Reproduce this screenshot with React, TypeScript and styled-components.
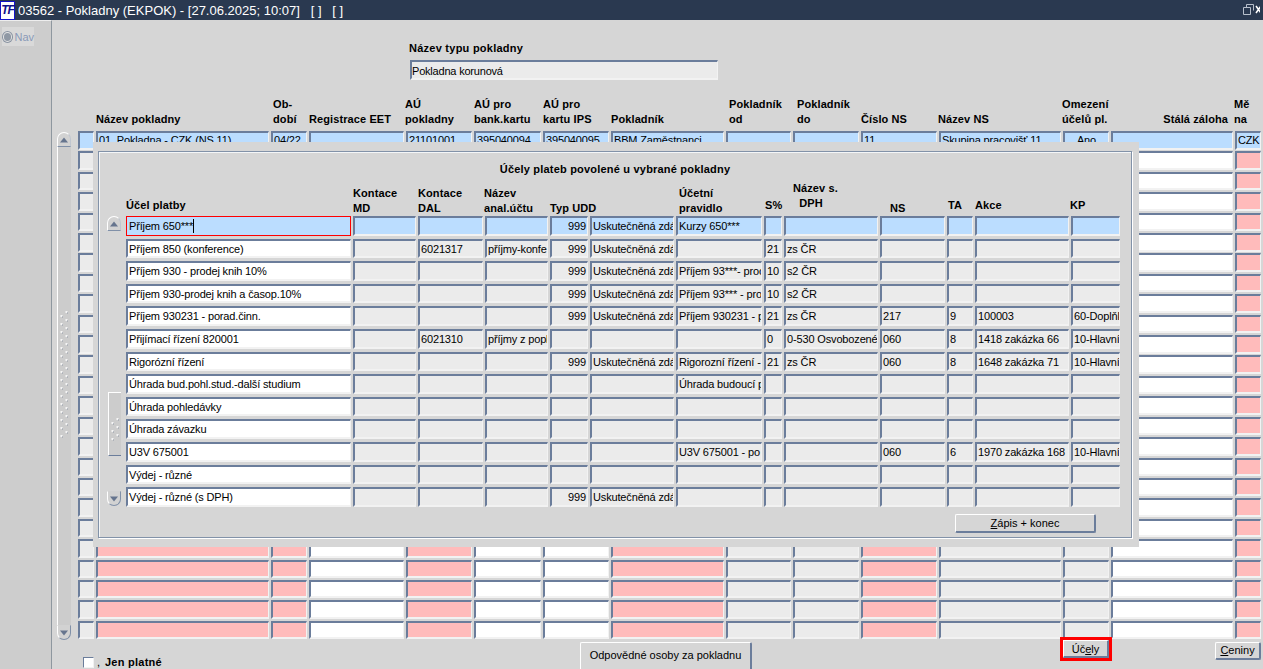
import React from "react";
import styled, { createGlobalStyle } from "styled-components";

const Global = createGlobalStyle`
  html, body { margin: 0; padding: 0; background: #d6d6d6; }
  * { box-sizing: border-box; }
  body { font-family: "Liberation Sans", Arial, sans-serif; font-size: 11px; color: #000; }
`;

const BG = "#d6d6d6";
const BLUE = "#bbddff";
const PINK = "#ffbbbb";
const GRAY = "#ebebeb";
const WHITE = "#ffffff";

type Tone = "blue" | "pink" | "gray" | "white";
const toneColor: Record<Tone, string> = { blue: BLUE, pink: PINK, gray: GRAY, white: WHITE };

const Screen = styled.div`
  width: 1263px;
  height: 669px;
  overflow: hidden;
  display: flex;
  flex-direction: column;
  background: ${BG};
`;
const TitleBar = styled.header`
  height: 20px;
  flex: none;
  background: #2a3950;
  color: #fff;
  display: flex;
  align-items: center;
  font-size: 13px;
  white-space: pre;
`;
const Logo = styled.div`
  width: 15px;
  height: 19px;
  margin-right: 3px;
  background: #fff;
  border: 1px solid #1414c8;
  color: #10108a;
  font: italic 700 12px/17px "Liberation Sans", sans-serif;
  text-align: center;
  letter-spacing: -1px;
`;
const WindowIcon = styled.svg`
  margin-left: auto;
  margin-right: 3px;
  flex: none;
`;
const Body = styled.div`
  flex: 1;
  display: flex;
  min-height: 0;
`;
const Rail = styled.nav`
  width: 52px;
  flex: none;
  background: #cdcdcd;
  border-top: 1px solid #eeeeee;
  border-right: 1px solid #8e979f;
  padding: 6px 0 0 2px;
`;
const NavItem = styled.div`
  width: 32px;
  height: 19px;
  background: #d9d9d9;
  color: #8a9ab8;
  display: flex;
  align-items: center;
  gap: 2px;
  font-size: 11px;
`;
const Radio = styled.span`
  width: 10px;
  height: 10px;
  border-radius: 50%;
  background: #8f98a4;
  border: 1px solid #e4e4e4;
  box-shadow: 0 0 0 1px #8a94a2;
  margin-left: 1px;
`;
const Main = styled.main`
  position: relative;
  flex: 1;
  min-width: 0;
  display: flex;
  flex-direction: column;
`;
const TypeBlock = styled.section`
  margin: 21px 0 0 357px;
  width: 309px;
  height: 39px;
`;
const BoldLabel = styled.div`
  font-weight: 700;
  font-size: 11px;
  line-height: 15px;
  letter-spacing: 0.25px;
  white-space: pre;
`;
const TypeField = styled.div`
  margin: 4px 0 0 1px;
  height: 20px;
  padding: 1px 0;
  line-height: 16px;
  letter-spacing: -0.2px;
  background: ${GRAY};
  border-style: solid;
  border-width: 2px 1px 2px 2px;
  border-color: #6b7d9b #f2f2f2 #f2f2f2 #6b7d9b;
`;
const GridArea = styled.section`
  margin-top: 17px;
  display: flex;
  align-items: flex-start;
  padding-left: 5px;
`;
const Scroll = styled.div<{ $height: number; $top: number }>`
  width: 14px;
  height: ${(p) => p.$height}px;
  margin-top: ${(p) => p.$top}px;
  flex: none;
  display: flex;
  flex-direction: column;
`;
const ScrollButton = styled.div<{ $down?: boolean }>`
  width: 14px;
  height: 15px;
  flex: none;
  display: flex;
  align-items: center;
  justify-content: center;
  background: #d2d2d2;
  border: 1px solid #fff;
  border-color: ${(p) => (p.$down ? "#d2d2d2 #8090a8 #8090a8 #fff" : "#fff #c0c6d0 #8090a8 #fff")};
  border-radius: ${(p) => (p.$down ? "0 0 7px 7px" : "7px 7px 0 0")};
`;
const Track = styled.div`
  flex: 1;
  position: relative;
  background: #cccccc;
  border-left: 1px solid #fff;
`;
const Grid = styled.div`
  margin-left: 7px;
  display: flex;
  flex-direction: column;
`;
const HeaderRow = styled.div<{ $cols: string; $height: number }>`
  display: grid;
  grid-template-columns: ${(p) => p.$cols};
  height: ${(p) => p.$height}px;
  align-items: end;
`;
const HeadCell = styled(BoldLabel)<{ $dx?: number; $lift?: number; $right?: boolean }>`
  letter-spacing: 0.1px;
  margin-left: ${(p) => p.$dx ?? 0}px;
  padding-bottom: ${(p) => p.$lift ?? 0}px;
  text-align: ${(p) => (p.$right ? "right" : "left")};
  padding-right: ${(p) => (p.$right ? 7 : 0)}px;
`;
const DataRows = styled.div<{ $gap: number }>`
  display: flex;
  flex-direction: column;
  gap: ${(p) => p.$gap}px;
`;
const DataRow = styled.div<{ $cols: string; $height: number }>`
  display: grid;
  grid-template-columns: ${(p) => p.$cols};
  height: ${(p) => p.$height}px;
`;
const Field = styled.div<{ $tone: Tone; $align?: string; $focus?: boolean; $line?: number }>`
  min-width: 0;
  margin-right: 2px;
  padding: 0 1px 0 1px;
  overflow: hidden;
  white-space: pre;
  letter-spacing: -0.15px;
  line-height: ${(p) => p.$line ?? 15}px;
  background: ${(p) => toneColor[p.$tone]};
  text-align: ${(p) => p.$align ?? "left"};
  border-style: solid;
  border-width: 2px 1px 2px 2px;
  border-color: #6b7d9b #f2f2f2 #f2f2f2 #6b7d9b;
  ${(p) => (p.$focus ? "border: 1px solid #f00; padding-left: 2px; line-height: 19px;" : "")}
`;
const Caret = styled.span`
  display: inline-block;
  width: 1px;
  height: 14px;
  background: #000;
  vertical-align: -3px;
`;
const Footer = styled.footer`
  display: grid;
  grid-template-columns: 528px 483px 152px 46px;
  align-items: start;
  height: 29px;
`;
const JenPlatne = styled.label`
  display: flex;
  align-items: center;
  margin: 16px 0 0 31px;
  font-weight: 700;
  font-size: 11px;
  letter-spacing: 0.25px;
  white-space: nowrap;
`;
const CheckBox = styled.span`
  width: 11px;
  height: 11px;
  background: #fff;
  border: 1px solid;
  border-color: #6b7d9b #f2f2f2 #f2f2f2 #6b7d9b;
`;
const Comma = styled.span`
  width: 11px;
  padding-left: 3px;
  font-weight: 400;
`;
const PushButton = styled.button`
  font: 11px "Liberation Sans", sans-serif;
  color: #000;
  height: 18px;
  padding: 0;
  background: ${BG};
  border-style: solid;
  border-width: 1px 2px 2px 1px;
  border-color: #fff #6b7d9b #6b7d9b #fff;
  border-radius: 2px;
  white-space: nowrap;
`;
const TabButton = styled(PushButton)`
  height: 32px;
  width: 172px;
  margin-top: 1.5px;
  padding-bottom: 4px;
`;
const MarkedButton = styled(PushButton)`
  width: 46px;
  border-radius: 0;
  outline: 3px solid #f00;
`;
const SideButton = styled(PushButton)`
  width: 46px;
  margin-top: 1.5px;
`;
const Underlined = styled.span`
  text-decoration: underline;
`;
const Modal = styled.aside`
  position: absolute;
  left: 41px;
  top: 122px;
  width: 1046px;
  height: 405px;
  background: ${BG};
  padding: 9px 7px 9px 5px;
`;
const Frame = styled.div`
  height: 100%;
  border: 1px solid #8292a8;
  box-shadow: 1px 1px 0 #fff, inset 1px 1px 0 #f4f6f8;
  padding: 10px 0 0 8px;
  display: flex;
  flex-direction: column;
`;
const ModalTitle = styled(BoldLabel)`
  text-align: center;
  margin-left: -8px;
  letter-spacing: 0.2px;
`;
const ModalBody = styled.div`
  display: flex;
  align-items: flex-start;
`;
const ModalScrollTrack = styled.div`
  flex: 1;
  position: relative;
`;
const Thumb = styled.div`
  position: absolute;
  left: 1px;
  top: 161px;
  width: 13px;
  height: 64px;
  background: #cccccc;
  border-left: 1px solid #fff;
  border-top: 1px solid #fff;
  border-bottom: 1px solid #6b7d9b;
`;
const ModalGrid = styled.div`
  margin-left: 5px;
  display: flex;
  flex-direction: column;
`;
const ModalActions = styled.div`
  display: flex;
  justify-content: flex-end;
  margin: 7px 26px 0 0;
`;
const SaveButton = styled(PushButton)`
  width: 141px;
  height: 19px;
`;

const Arrow = ({ down }: { down?: boolean }) => (
  <svg width="10" height="6" viewBox="0 0 10 6">
    <path d={down ? "M1 0.5H9L5 5.5Z" : "M1 5.5H9L5 0.5Z"} fill="#66758e" />
  </svg>
);

const Dots = ({ rows, className }: { rows: number; className?: string }) => (
  <svg className={className} width="9" height={rows * 8 + 5} viewBox={`0 0 9 ${rows * 8 + 5}`}>
    {Array.from({ length: rows }, (_, i) => (
      <g key={i}>
        <rect x="0.5" y={i * 8 + 4} width="2" height="2" fill="#f5f5f5" />
        <rect x="2" y={i * 8 + 5.5} width="1" height="1" fill="#8d96a4" />
        <rect x="5.5" y={i * 8} width="2" height="2" fill="#f5f5f5" />
        <rect x="7" y={i * 8 + 1.5} width="1" height="1" fill="#8d96a4" />
      </g>
    ))}
  </svg>
);
const TrackGrip = styled(Dots)`
  position: absolute;
  left: 2px;
  top: 164px;
`;
const ThumbGrip = styled(Dots)`
  position: absolute;
  left: 2px;
  top: 25px;
`;

const bgCols = "18px 175px 38px 97px 68px 69px 68px 115px 67px 68px 78px 124px 48px 124px 28px";
const bgTones: Tone[] = ["gray", "pink", "pink", "white", "pink", "white", "white", "pink", "gray", "gray", "pink", "gray", "gray", "white", "pink"];
const bgHeads: { lines: string[]; dx?: number; right?: boolean }[] = [
  { lines: [""] },
  { lines: ["Název pokladny"] },
  { lines: ["Ob-", "dobí"], dx: 2 },
  { lines: ["Registrace EET"] },
  { lines: ["AÚ", "pokladny"], dx: -1 },
  { lines: ["AÚ pro", "bank.kartu"] },
  { lines: ["AÚ pro", "kartu IPS"] },
  { lines: ["Pokladník"] },
  { lines: ["Pokladník", "od"], dx: 3 },
  { lines: ["Pokladník", "do"], dx: 4 },
  { lines: ["Číslo NS"] },
  { lines: ["Název NS"], dx: -1 },
  { lines: ["Omezení", "účelů pl."], dx: -1 },
  { lines: ["Stálá záloha"], right: true },
  { lines: ["Mě", "na"], dx: -1 },
];
const bgFirst = ["", "01  Pokladna - CZK (NS 11)", "04/22", "", "21101001", "395040094", "395040095", "BBM Zaměstnanci", "", "", "11", "Skupina pracovišť 11", "Ano", "", "CZK"];

const mCols = "227px 65px 67px 65px 40px 86px 88px 20px 96px 67px 28px 96px 51px";
const mHeads: { lines: string[]; dx?: number; lift?: number }[] = [
  { lines: ["Účel platby"], lift: 3 },
  { lines: ["Kontace", "MD"] },
  { lines: ["Kontace", "DAL"] },
  { lines: ["Název", "anal.účtu"], dx: -1 },
  { lines: ["Typ UDD"] },
  { lines: [""] },
  { lines: ["Účetní", "pravidlo"], dx: 3 },
  { lines: ["S%"], dx: 1, lift: 3 },
  { lines: ["Název s.", "  DPH"], dx: 9, lift: 5 },
  { lines: ["NS"], dx: 10 },
  { lines: ["TA"], dx: 1, lift: 3 },
  { lines: ["Akce"], lift: 3 },
  { lines: ["KP"], dx: -1, lift: 3 },
];
const U = "Uskutečněná zdá";
const mRows: string[][] = [
  ["Příjem 650***", "", "", "", "999", U, "Kurzy 650***", "", "", "", "", "", ""],
  ["Příjem 850 (konference)", "", "6021317", "příjmy-konfe", "999", U, "", "21", "zs ČR", "", "", "", ""],
  ["Příjem 930 - prodej knih 10%", "", "", "", "999", U, "Příjem 93***- proc", "10", "s2 ČR", "", "", "", ""],
  ["Příjem 930-prodej knih a časop.10%", "", "", "", "999", U, "Příjem 93*** - pro", "10", "s2 ČR", "", "", "", ""],
  ["Příjem 930231 - porad.činn.", "", "", "", "999", U, "Příjem 930231 - p", "21", "zs ČR", "217", "9", "100003", "60-Doplňk"],
  ["Přijímací řízení 820001", "", "6021310", "příjmy z popl", "", "", "", "0", "0-530 Osvobozené", "060", "8", "1418 zakázka 66", "10-Hlavní"],
  ["Rigorózní řízení", "", "", "", "999", U, "Rigorozní řízení -", "21", "zs ČR", "060", "8", "1648 zakázka 71", "10-Hlavní"],
  ["Úhrada bud.pohl.stud.-další studium", "", "", "", "", "", "Úhrada budoucí p", "", "", "", "", "", ""],
  ["Úhrada pohledávky", "", "", "", "", "", "", "", "", "", "", "", ""],
  ["Úhrada závazku", "", "", "", "", "", "", "", "", "", "", "", ""],
  ["U3V 675001", "", "", "", "", "", "U3V 675001 - po", "", "", "060", "6", "1970 zakázka 168", "10-Hlavní"],
  ["Výdej - různé", "", "", "", "", "", "", "", "", "", "", "", ""],
  ["Výdej - různé (s DPH)", "", "", "", "999", U, "", "", "", "", "", "", ""],
];

export default function App() {
  return (
    <Screen>
      <Global />
      <TitleBar>
        <Logo>TF</Logo>
        {"03562 - Pokladny (EKPOK) - [27.06.2025; 10:07]   [ ]   [ ]"}
        <WindowIcon width="17" height="12" viewBox="0 0 17 12">
          <path d="M3.5 0.5h7v6M3.5 0.5v3M0.5 3.5h7v7h-7z" fill="none" stroke="#b8c0cc" />
          <path d="M13 2l5 7M18 2l-5 7" stroke="#fff" strokeWidth="1.5" />
        </WindowIcon>
      </TitleBar>
      <Body>
        <Rail>
          <NavItem>
            <Radio />
            Nav
          </NavItem>
        </Rail>
        <Main>
          <TypeBlock>
            <BoldLabel>Název typu pokladny</BoldLabel>
            <TypeField>Pokladna korunová</TypeField>
          </TypeBlock>
          <GridArea>
            <Scroll $height={508} $top={35}>
              <ScrollButton><Arrow /></ScrollButton>
              <Track>
                <TrackGrip rows={16} />
              </Track>
              <ScrollButton $down><Arrow down /></ScrollButton>
            </Scroll>
            <Grid>
              <HeaderRow $cols={bgCols} $height={34}>
                {bgHeads.map((h, i) => (
                  <HeadCell key={i} $dx={h.dx} $right={h.right} $lift={4}>
                    {h.lines.map((l, j) => (
                      <div key={j}>{l}</div>
                    ))}
                  </HeadCell>
                ))}
              </HeaderRow>
              <DataRows $gap={1.92}>
                {Array.from({ length: 25 }, (_, r) => (
                  <DataRow key={r} $cols={bgCols} $height={18.5}>
                    {bgTones.map((t, c) => (
                      <Field key={c} $tone={r === 0 ? "blue" : t} $align={c === 12 ? "center" : "left"}>
                        {r === 0 ? bgFirst[c] : ""}
                      </Field>
                    ))}
                  </DataRow>
                ))}
              </DataRows>
            </Grid>
          </GridArea>
          <Footer>
            <JenPlatne>
              <CheckBox />
              <Comma>,</Comma>
              Jen platné
            </JenPlatne>
            <TabButton>Odpovědné osoby za pokladnu</TabButton>
            <MarkedButton>
              Úč<Underlined>e</Underlined>ly
            </MarkedButton>
            <SideButton>
              <Underlined>C</Underlined>eniny
            </SideButton>
          </Footer>
          <Modal>
            <Frame>
              <ModalTitle>Účely plateb povolené u vybrané pokladny</ModalTitle>
              <ModalBody>
                <Scroll $height={290} $top={39}>
                  <ScrollButton><Arrow /></ScrollButton>
                  <ModalScrollTrack>
                    <Thumb>
                      <ThumbGrip rows={3} />
                    </Thumb>
                  </ModalScrollTrack>
                  <ScrollButton $down><Arrow down /></ScrollButton>
                </Scroll>
                <ModalGrid>
                  <HeaderRow $cols={mCols} $height={39}>
                    {mHeads.map((h, i) => (
                      <HeadCell key={i} $dx={h.dx} $lift={h.lift ?? 0}>
                        {h.lines.map((l, j) => (
                          <div key={j}>{l}</div>
                        ))}
                      </HeadCell>
                    ))}
                  </HeaderRow>
                  <DataRows $gap={3}>
                    {mRows.map((row, r) => (
                      <DataRow key={r} $cols={mCols} $height={19.6}>
                        {row.map((v, c) => (
                          <Field
                            key={c}
                            $line={17}
                            $tone={r === 0 ? "blue" : c === 0 ? "white" : "gray"}
                            $align={c === 4 ? "right" : "left"}
                            $focus={r === 0 && c === 0}
                          >
                            {v}
                            {r === 0 && c === 0 ? <Caret /> : null}
                          </Field>
                        ))}
                      </DataRow>
                    ))}
                  </DataRows>
                  <ModalActions>
                    <SaveButton>
                      <Underlined>Z</Underlined>ápis + konec
                    </SaveButton>
                  </ModalActions>
                </ModalGrid>
              </ModalBody>
            </Frame>
          </Modal>
        </Main>
      </Body>
    </Screen>
  );
}
